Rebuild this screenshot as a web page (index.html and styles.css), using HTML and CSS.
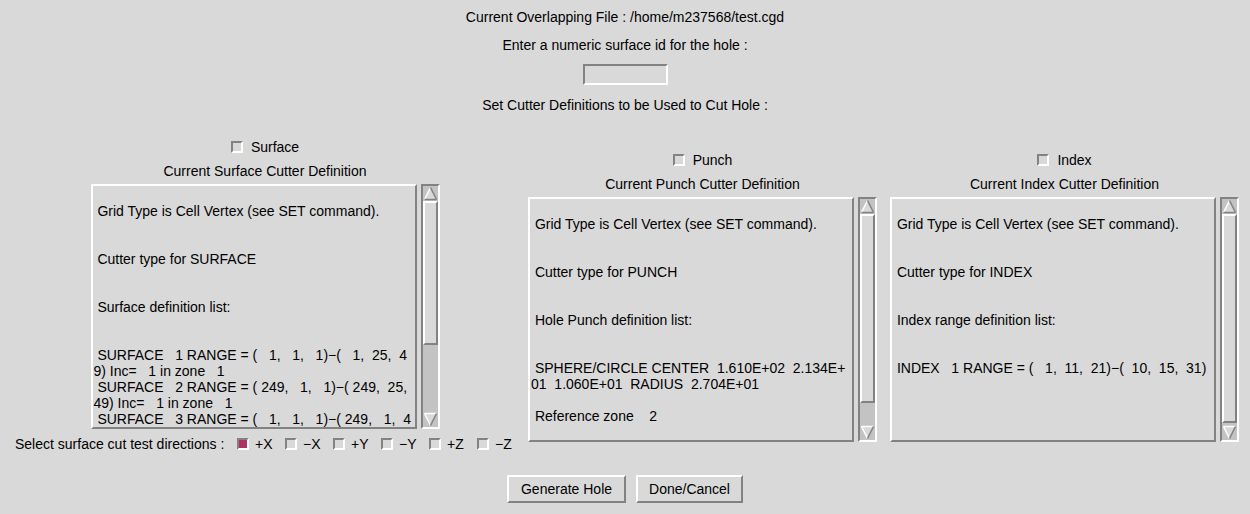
FILE: index.html
```
<!DOCTYPE html>
<html>
<head>
<meta charset="utf-8">
<link rel="stylesheet" href="styles.css">
</head>
<body>
<div class="page">
  <div class="hdr">
    <div class="line">Current Overlapping File : /home/m237568/test.cgd</div>
    <div class="line l2">Enter a numeric surface id for the hole :</div>
    <input class="entry" type="text" value="">
    <div class="line l3">Set Cutter Definitions to be Used to Cut Hole :</div>
  </div>

  <div class="cols">
    <div class="col col-surface">
      <div class="chk-row"><span class="chk"></span><span>Surface</span></div>
      <div class="title">Current Surface Cutter Definition</div>
      <div class="panel">
        <div class="text">
 Grid Type is Cell Vertex (see SET command).


 Cutter type for SURFACE


 Surface definition list:


 SURFACE   1 RANGE = (   1,   1,   1)−(   1,  25,  4
9) Inc=   1 in zone   1
 SURFACE   2 RANGE = ( 249,   1,   1)−( 249,  25,
49) Inc=   1 in zone   1
 SURFACE   3 RANGE = (   1,   1,   1)−( 249,   1,  4</div>
        <div class="sb">
          <svg class="arrow" viewBox="0 0 15 15"><polygon points="7.5,1.5 1.5,13.5 13.5,13.5" fill="#d9d9d9"/><line x1="1.5" y1="13.5" x2="7.5" y2="1.5" stroke="#fff" stroke-width="1.5"/><line x1="7.5" y1="1.5" x2="13.5" y2="13.5" stroke="#828282" stroke-width="1.5"/><line x1="1.5" y1="13.5" x2="13.5" y2="13.5" stroke="#828282" stroke-width="1.5"/></svg>
          <div class="thumb thumb-surface"></div>
          <div class="sb-fill"></div>
          <svg class="arrow" viewBox="0 0 15 15"><polygon points="1.5,1.5 13.5,1.5 7.5,13.5" fill="#d9d9d9"/><line x1="1.5" y1="1.5" x2="13.5" y2="1.5" stroke="#fff" stroke-width="1.5"/><line x1="1.5" y1="1.5" x2="7.5" y2="13.5" stroke="#fff" stroke-width="1.5"/><line x1="13.5" y1="1.5" x2="7.5" y2="13.5" stroke="#828282" stroke-width="1.5"/></svg>
        </div>
      </div>
      <div class="dirs">
        <span class="dirs-label">Select surface cut test directions :</span>
        <span class="dir"><span class="chk on"></span><span>+X</span></span>
        <span class="dir"><span class="chk"></span><span>−X</span></span>
        <span class="dir"><span class="chk"></span><span>+Y</span></span>
        <span class="dir"><span class="chk"></span><span>−Y</span></span>
        <span class="dir"><span class="chk"></span><span>+Z</span></span>
        <span class="dir"><span class="chk"></span><span>−Z</span></span>
      </div>
    </div>

    <div class="col col-punch">
      <div class="chk-row"><span class="chk"></span><span>Punch</span></div>
      <div class="title">Current Punch Cutter Definition</div>
      <div class="panel">
        <div class="text">
 Grid Type is Cell Vertex (see SET command).


 Cutter type for PUNCH


 Hole Punch definition list:


 SPHERE/CIRCLE CENTER  1.610E+02  2.134E+
01  1.060E+01  RADIUS  2.704E+01

 Reference zone    2</div>
        <div class="sb">
          <svg class="arrow" viewBox="0 0 15 15"><polygon points="7.5,1.5 1.5,13.5 13.5,13.5" fill="#d9d9d9"/><line x1="1.5" y1="13.5" x2="7.5" y2="1.5" stroke="#fff" stroke-width="1.5"/><line x1="7.5" y1="1.5" x2="13.5" y2="13.5" stroke="#828282" stroke-width="1.5"/><line x1="1.5" y1="13.5" x2="13.5" y2="13.5" stroke="#828282" stroke-width="1.5"/></svg>
          <div class="thumb thumb-punch"></div>
          <div class="sb-fill"></div>
          <svg class="arrow" viewBox="0 0 15 15"><polygon points="1.5,1.5 13.5,1.5 7.5,13.5" fill="#d9d9d9"/><line x1="1.5" y1="1.5" x2="13.5" y2="1.5" stroke="#fff" stroke-width="1.5"/><line x1="1.5" y1="1.5" x2="7.5" y2="13.5" stroke="#fff" stroke-width="1.5"/><line x1="13.5" y1="1.5" x2="7.5" y2="13.5" stroke="#828282" stroke-width="1.5"/></svg>
        </div>
      </div>
    </div>

    <div class="col col-index">
      <div class="chk-row"><span class="chk"></span><span>Index</span></div>
      <div class="title">Current Index Cutter Definition</div>
      <div class="panel">
        <div class="text">
 Grid Type is Cell Vertex (see SET command).


 Cutter type for INDEX


 Index range definition list:


 INDEX   1 RANGE = (   1,  11,  21)−(  10,  15,  31)</div>
        <div class="sb">
          <svg class="arrow" viewBox="0 0 15 15"><polygon points="7.5,1.5 1.5,13.5 13.5,13.5" fill="#d9d9d9"/><line x1="1.5" y1="13.5" x2="7.5" y2="1.5" stroke="#fff" stroke-width="1.5"/><line x1="7.5" y1="1.5" x2="13.5" y2="13.5" stroke="#828282" stroke-width="1.5"/><line x1="1.5" y1="13.5" x2="13.5" y2="13.5" stroke="#828282" stroke-width="1.5"/></svg>
          <div class="thumb thumb-index"></div>
          <div class="sb-fill"></div>
          <svg class="arrow" viewBox="0 0 15 15"><polygon points="1.5,1.5 13.5,1.5 7.5,13.5" fill="#d9d9d9"/><line x1="1.5" y1="1.5" x2="13.5" y2="1.5" stroke="#fff" stroke-width="1.5"/><line x1="1.5" y1="1.5" x2="7.5" y2="13.5" stroke="#fff" stroke-width="1.5"/><line x1="13.5" y1="1.5" x2="7.5" y2="13.5" stroke="#828282" stroke-width="1.5"/></svg>
        </div>
      </div>
    </div>
  </div>

  <div class="buttons">
    <button class="btn btn-gen" type="button">Generate Hole</button>
    <button class="btn btn-done" type="button">Done/Cancel</button>
  </div>
</div>
</body>
</html>
```
FILE: styles.css
```
html, body {
  margin: 0;
  padding: 0;
  background: #d9d9d9;
}
body {
  font-family: "Liberation Sans", Arial, Helvetica, sans-serif;
  font-size: 14px;
  color: #000;
}
.page {
  width: 1250px;
  height: 514px;
  overflow: hidden;
}
.hdr {
  display: flex;
  flex-direction: column;
  align-items: center;
  padding-top: 9px;
}
.line {
  height: 16px;
  line-height: 16px;
  white-space: nowrap;
}
.l2 { margin-top: 12px; }
.l3 { margin-top: 12px; }
.entry {
  display: block;
  margin: 11px 0 0 0;
  width: 85px;
  height: 21px;
  box-sizing: border-box;
  padding: 0;
  border: 2px solid;
  border-color: #828282 #ffffff #ffffff #828282;
  background: #d9d9d9;
  outline: none;
  font: inherit;
}
.cols {
  display: flex;
  align-items: center;
  margin-top: 26px;
}
.col {
  display: flex;
  flex-direction: column;
  align-items: center;
}
.col-surface { width: 500px; margin-left: 15px; }
.col-punch { width: 349px; margin-left: 13px; }
.col-index { width: 349px; margin-left: 13px; }

.chk-row {
  display: flex;
  align-items: center;
  gap: 8px;
  height: 16px;
  line-height: 16px;
}
.chk {
  display: block;
  width: 12px;
  height: 12px;
  box-sizing: border-box;
  border: 2px solid;
  border-color: #828282 #ffffff #ffffff #828282;
  background: #d9d9d9;
  flex: none;
}
.chk.on { background: #b03060; }

.title {
  margin-top: 8px;
  height: 16px;
  line-height: 16px;
  white-space: nowrap;
}
.panel {
  margin-top: 5px;
  display: flex;
  gap: 4px;
}
.text {
  width: 326px;
  height: 245px;
  box-sizing: border-box;
  border: 2px solid;
  border-color: #ffffff #828282 #828282 #ffffff;
  padding: 1px 0 0 1px;
  white-space: pre;
  overflow: hidden;
  line-height: 16px;
}
.sb {
  width: 19px;
  height: 245px;
  box-sizing: border-box;
  border: 2px solid;
  border-color: #828282 #ffffff #ffffff #828282;
  background: #c3c3c3;
  display: flex;
  flex-direction: column;
}
.arrow {
  display: block;
  width: 15px;
  height: 15px;
  flex: none;
}
.thumb {
  flex: none;
  box-sizing: border-box;
  border: 2px solid;
  border-color: #ffffff #828282 #828282 #ffffff;
  background: #d9d9d9;
}
.thumb-surface { height: 144px; }
.thumb-punch { height: 189px; }
.thumb-index { height: 209px; }
.sb-fill { flex: 1; }

.dirs {
  align-self: stretch;
  display: flex;
  align-items: center;
  height: 22px;
  margin-top: 4px;
  white-space: nowrap;
}
.dirs-label { width: 222px; flex: none; }
.dir {
  display: flex;
  align-items: center;
  gap: 6px;
  width: 48px;
  flex: none;
}

.buttons {
  display: flex;
  justify-content: center;
  gap: 10px;
  margin-top: 20px;
}
.btn {
  height: 28px;
  box-sizing: border-box;
  border: 2px solid;
  border-color: #ffffff #828282 #828282 #ffffff;
  background: #d9d9d9;
  color: #000;
  font: inherit;
  line-height: 24px;
  padding: 0;
  margin: 0;
  text-align: center;
}
.btn-gen { width: 119px; }
.btn-done { width: 107px; }
```
